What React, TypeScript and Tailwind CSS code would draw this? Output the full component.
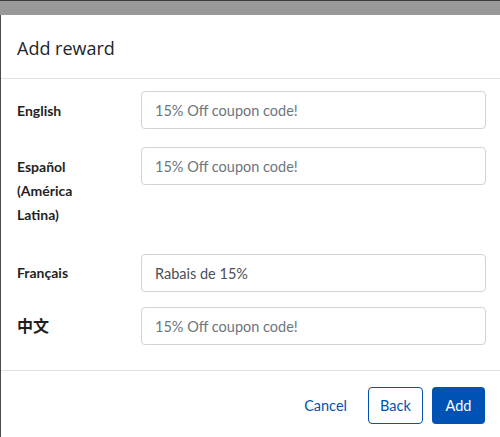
import React from 'react';

const rows = [
  { label: 'English', value: '', rowClass: 'mb-[18px]', labelClass: 'text-[14px] font-bold leading-6 pt-[8px]' },
  { label: 'Español (América Latina)', value: '', rowClass: 'h-[92px] mb-[15px]', labelClass: 'text-[14px] font-bold leading-6 pt-2 w-[80px]' },
  { label: 'Français', value: 'Rabais de 15%', rowClass: 'mb-[15px]', labelClass: 'text-[14px] font-bold leading-6 pt-[7px]' },
  { label: '中文', value: '', rowClass: '', labelClass: 'text-[16px] font-bold leading-6 pt-[7px]' },
];

export default function App() {
  return (
    <div className="w-[500px] h-[437px] bg-[#999999] border-t border-[#3a3a3a] flex flex-col font-['Lato','Noto_Sans_CJK_SC',sans-serif]">
      <div className="h-[14px] shrink-0" />
      <div className="flex-1 bg-white border-l border-[#4a4a4a] flex flex-col">
        <div className="h-[64px] flex items-center px-4 pt-[3px] border-b border-[#dee2e6] shrink-0">
          <h2 className="text-[18px] text-[#212529] font-['Open_Sans',sans-serif]">Add reward</h2>
        </div>
        <div className="pt-[12px] pl-4 pr-[14px] border-b border-[#dee2e6] h-[292px] shrink-0">
          {rows.map((r) => (
            <div key={r.label} className={`flex items-start ${r.rowClass}`}>
              <div className="w-[124px] shrink-0 text-[#1f1f1f]">
                <div className={r.labelClass}>{r.label}</div>
              </div>
              <input
                readOnly
                value={r.value}
                placeholder="15% Off coupon code!"
                className="flex-1 h-[38px] rounded-[4px] border border-[#ced4da] px-[13px] text-[14.5px] text-[#495057] placeholder:text-[#6c757d] outline-none font-['Lato',sans-serif]"
              />
            </div>
          ))}
        </div>
        <div className="flex-1 flex items-center justify-end gap-[9px] pr-[15px] pt-[3px]">
          <button className="h-[37px] px-[10px] text-[14.5px] text-[#0052b4] mr-[2px]">Cancel</button>
          <button className="h-[37px] w-[55px] rounded-[4px] border border-[#0052b4] text-[14.5px] text-[#0052b4] bg-white">Back</button>
          <button className="h-[37px] w-[53px] rounded-[4px] bg-[#0052b4] text-[14.5px] text-white">Add</button>
        </div>
      </div>
    </div>
  );
}
